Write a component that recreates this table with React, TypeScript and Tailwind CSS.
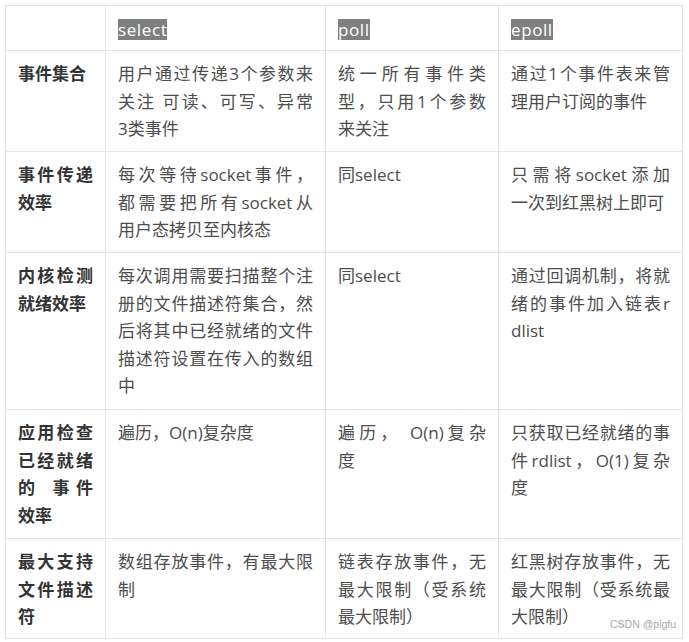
import React from "react";

type Cell = string[];

const header = ["", "select", "poll", "epoll"];

const rows: { h: string; cells: Cell[] }[] = [
  {
    h: "h-[101px]",
    cells: [
      ["事件集合"],
      ["用户通过传递3个参数来", "关注 可读、可写、异常", "3类事件"],
      ["统一所有事件类", "型，只用1个参数", "来关注"],
      ["通过1个事件表来管", "理用户订阅的事件"],
    ],
  },
  {
    h: "h-[101px]",
    cells: [
      ["事件传递", "效率"],
      ["每次等待socket事件，", "都需要把所有socket从", "用户态拷贝至内核态"],
      ["同select"],
      ["只需将socket添加", "一次到红黑树上即可"],
    ],
  },
  {
    h: "h-[157px]",
    cells: [
      ["内核检测", "就绪效率"],
      [
        "每次调用需要扫描整个注",
        "册的文件描述符集合，然",
        "后将其中已经就绪的文件",
        "描述符设置在传入的数组",
        "中",
      ],
      ["同select"],
      ["通过回调机制，将就", "绪的事件加入链表r", "dlist"],
    ],
  },
  {
    h: "h-[129px]",
    cells: [
      ["应用检查", "已经就绪", "的 事件", "效率"],
      ["遍历，O(n)复杂度"],
      ["遍历， O(n)复杂", "度"],
      ["只获取已经就绪的事", "件rdlist，O(1)复杂", "度"],
    ],
  },
  {
    h: "h-[100px]",
    cells: [
      ["最大支持", "文件描述", "符"],
      ["数组存放事件，有最大限", "制"],
      ["链表存放事件，无", "最大限制（受系统", "最大限制）"],
      ["红黑树存放事件，无", "最大限制（受系统最", "大限制）"],
    ],
  },
];

function Lines({ lines }: { lines: string[] }) {
  return (
    <>
      {lines.map((l, i) => (
        <div
          key={i}
          className={
            i < lines.length - 1
              ? "text-justify [text-align-last:justify] whitespace-pre"
              : "text-left whitespace-pre"
          }
        >
          {l}
        </div>
      ))}
    </>
  );
}

export default function App() {
  return (
    <div
      className="relative w-[689px] h-[642px] bg-white pl-[5px] pt-[5px] text-[17px] leading-[27.5px] text-[#4d4d4d]"
      style={{ fontFamily: '"Open Sans", "Noto Sans CJK SC", sans-serif' }}
    >
      <table className="table-fixed border-collapse w-[677px]">
        <colgroup>
          <col className="w-[100px]" />
          <col className="w-[220px]" />
          <col className="w-[173px]" />
          <col className="w-[184px]" />
        </colgroup>
        <thead>
          <tr className="h-[45px]">
            {header.map((t, i) => (
              <td
                key={i}
                className="border border-[#e5e5e5] px-[12px] py-0 align-middle"
              >
                {t && (
                  <span className="inline-block h-[21px] leading-[21px] tracking-[0.6px] bg-[#7d7f81] text-white align-middle">
                    {t}
                  </span>
                )}
              </td>
            ))}
          </tr>
        </thead>
        <tbody>
          {rows.map((r, ri) => (
            <tr key={ri} className={r.h}>
              {r.cells.map((c, ci) => (
                <td
                  key={ci}
                  className={
                    "border border-[#e5e5e5] px-[12px] pt-[9px] pb-0 align-top " +
                    (ci === 0 ? "font-bold text-[#333333]" : "")
                  }
                >
                  <Lines lines={c} />
                </td>
              ))}
            </tr>
          ))}
        </tbody>
      </table>
      <div
        className="absolute left-[610px] top-[617px] text-[10.5px] leading-[14px] text-[#a8a8a8]"
        style={{ fontFamily: '"Liberation Sans", sans-serif' }}
      >
        CSDN @pigfu
      </div>
    </div>
  );
}
